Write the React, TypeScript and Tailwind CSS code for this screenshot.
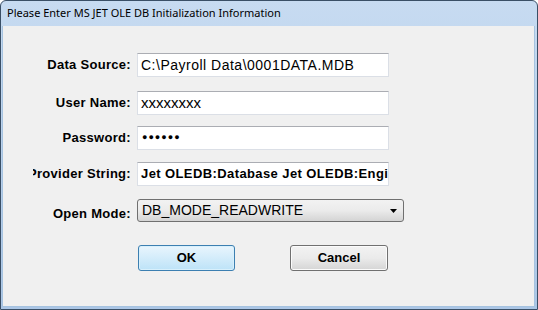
import React from 'react';

const fieldCls =
  'h-[24px] bg-white border border-[#dbdfe6] border-t-[#abadb3] flex items-center pl-[3px] overflow-hidden whitespace-nowrap';

function Row({ label, top, children }: { label: string; top: string; children: React.ReactNode }) {
  return (
    <div className={`flex items-center ${top}`}>
      <div className="ml-[30px] w-[98px] flex justify-end overflow-hidden whitespace-nowrap font-bold text-[13px] tracking-[0.3px] text-black">
        <span>{label}</span>
      </div>
      <div className="ml-[6px]">{children}</div>
    </div>
  );
}

export default function App() {
  return (
    <div
      className="w-[538px] h-[310px] flex flex-col rounded-t-[6px] border border-[#3a4f66] bg-gradient-to-b from-[#c7dbf1] to-[#abc6e6] overflow-hidden"
      style={{ fontFamily: '"Liberation Sans", Arial, sans-serif' }}
    >
      {/* title bar */}
      <div
        className="h-[25px] flex items-center pl-[6px] text-[11px] text-black"
        style={{ fontFamily: '"Noto Sans", "Open Sans", sans-serif' }}
      >
        Please Enter MS JET OLE DB Initialization Information
      </div>

      {/* client area */}
      <div className="flex-1 ml-[1px] mr-[2px] mb-[2px] bg-[#f0f0f0] border border-[#a6c3e0] border-t-0 flex flex-col">
        <Row label="Data Source:" top="mt-[27px]">
          <div className={`${fieldCls} w-[252px] border-[#b5cfe7] border-t-[#7da2ce] text-[14px] tracking-[0.5px]`}>
            C:\Payroll Data\0001DATA.MDB
          </div>
        </Row>

        <Row label="User Name:" top="mt-[14px]">
          <div className={`${fieldCls} w-[252px] h-[23px] text-[15px]`}>xxxxxxxx</div>
        </Row>

        <Row label="Password:" top="mt-[11px]">
          <div className={`${fieldCls} w-[252px] text-[9px] pl-[4px] tracking-[1px]`}>●●●●●●</div>
        </Row>

        <Row label="Provider String:" top="mt-[12px]">
          <div className={`${fieldCls} w-[252px] font-bold text-[13px] tracking-[0.4px]`}>
            Jet OLEDB:Database Jet OLEDB:Engine Type=5
          </div>
        </Row>

        <div className="flex mt-[13px]">
          <div className="ml-[30px] w-[98px] flex justify-end font-bold text-[13px] tracking-[0.3px] whitespace-nowrap">
            <span className="mt-[5px]">Open Mode:</span>
          </div>
          <div className="ml-[6px] w-[267px] h-[23px] rounded-[3px] border border-[#707070] bg-gradient-to-b from-[#f2f2f2] via-[#ebebeb] to-[#d4d4d4] flex items-center pl-[4px] pr-[6px] text-[14px]">
            <span className="flex-1">DB_MODE_READWRITE</span>
            <svg width="7" height="4" viewBox="0 0 7 4">
              <path d="M0 0h7L3.5 4z" fill="#000" />
            </svg>
          </div>
        </div>

        <div className="flex mt-[21px] ml-[135px] gap-[55px]">
          <button className="w-[97px] h-[26px] rounded-[3px] border border-[#3c7fb1] bg-gradient-to-b from-[#e9f5fd] to-[#bde3f8] font-bold text-[13px] shadow-[inset_0_0_0_1px_#d8f0fc]">
            OK
          </button>
          <button className="w-[98px] h-[26px] rounded-[3px] border border-[#707070] bg-gradient-to-b from-[#f2f2f2] via-[#ebebeb] to-[#d5d5d5] font-bold text-[13px] shadow-[inset_0_0_0_1px_#fbfbfb]">
            Cancel
          </button>
        </div>
      </div>
    </div>
  );
}
